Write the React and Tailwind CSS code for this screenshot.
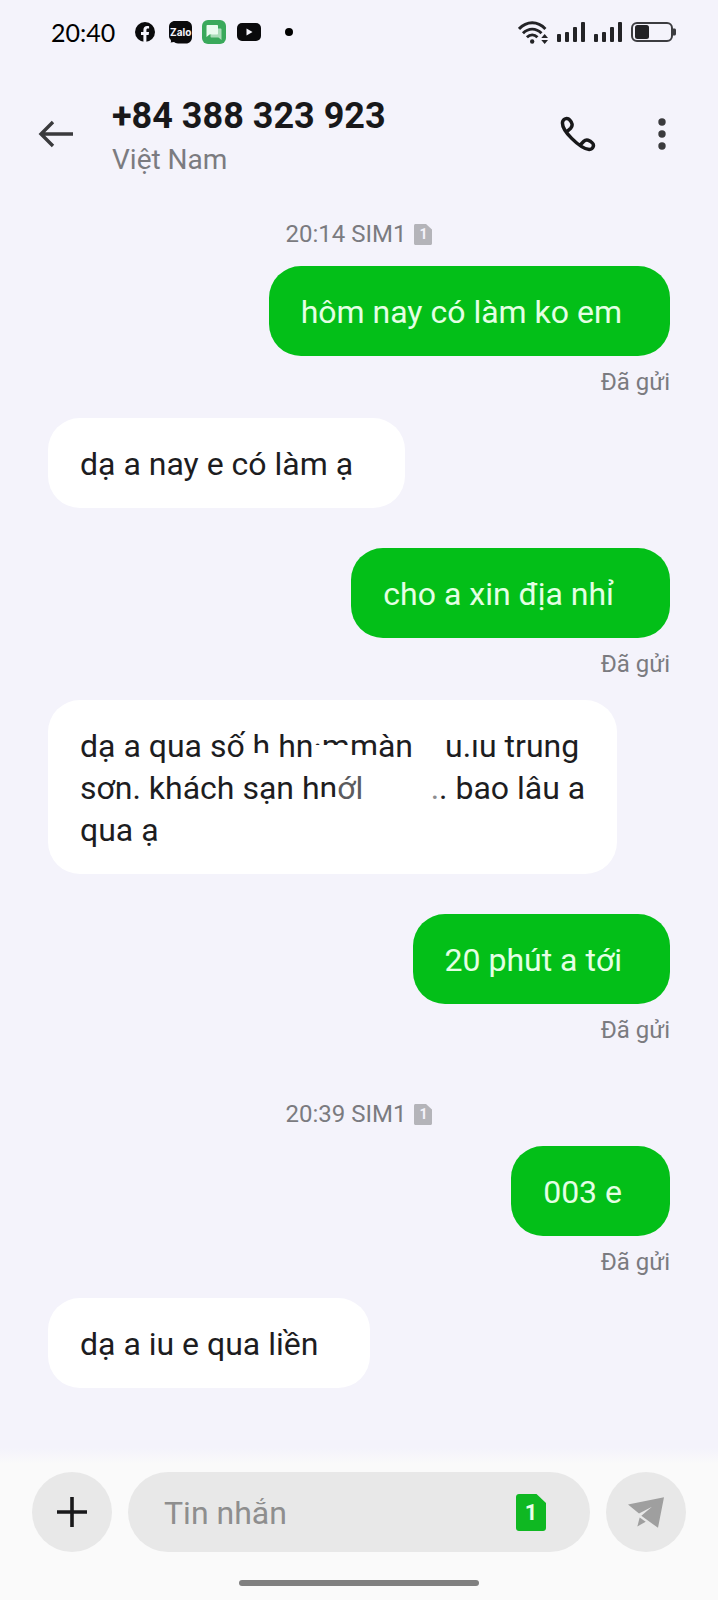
import { useState } from "react";

const conversation = [
  { type: "time", text: "20:14 SIM1" },
  { type: "sent", text: "hôm nay có làm ko em" },
  { type: "received", text: "dạ a nay e có làm ạ" },
  { type: "sent", text: "cho a xin địa nhỉ", wide: true },
  { type: "address" },
  { type: "sent", text: "20 phút a tới" },
  { type: "time", text: "20:39 SIM1" },
  { type: "sent", text: "003 e" },
  { type: "received", text: "dạ a iu e qua liền" },
];

const SignalBars = () => (
  <svg className="w-7 h-5" viewBox="0 0 28 20" fill="#232326" aria-hidden="true">
    <rect x="0" y="12" width="4" height="8" rx="1" />
    <rect x="8" y="10" width="4" height="10" rx="1" />
    <rect x="16" y="5" width="4" height="15" rx="1" />
    <rect x="24" y="0" width="4" height="20" rx="1" />
  </svg>
);

const StatusBar = () => (
  <div className="h-16 pl-[51px] pr-[42px] flex items-center justify-between">
    <div className="flex items-center">
      <span className="font-['Lato'] text-[25px] leading-8 text-black">20:40</span>
      {/* Facebook */}
      <svg className="w-5 h-5 ml-5" viewBox="0 0 20 20" aria-hidden="true">
        <circle cx="10" cy="10" r="10" fill="#0a0a0c" />
        <path d="M8.4 20v-7H6v-3h2.4V8c0-2.6 1.500-4 3.700-4 1 0 2 .2 2 .2v2.400h-1.200c-1.200 0-1.500.7-1.500 1.500V10h2.700l-.5 3h-2.200v7z" fill="#f4f3fb" />
      </svg>
      {/* Zalo */}
      <span className="relative w-[23px] h-[23px] ml-[14px] text-[#f4f3fb] text-[10px] leading-[22px] font-bold font-['Inter'] text-center">
        <svg className="absolute inset-0 w-full h-full" viewBox="0 0 23 23" aria-hidden="true">
          <path d="M6 0H17C20.500 0 23 2.500 23 6V16C23 20 20.500 22.500 17 22.500H9C7 22.500 6 21.500 5 21L1.500 21.500C2.500 20.500 2 19.500 1.500 18.500C.5 17.500 0 16.500 0 15V6C0 2.500 2.500 0 6 0Z" fill="#0a0a0c" />
        </svg>
        <span className="relative">Zalo</span>
      </span>
      {/* Messages */}
      <svg className="w-6 h-6 ml-[10px]" viewBox="0 0 24 24" aria-hidden="true">
        <rect width="24" height="24" rx="6" fill="#3aa95b" />
        <path d="M16 8.500h2.500c.6 0 1 .4 1 1V20l-3-2.500H9.500c-.6 0-1-.4-1-1V15z" fill="#a9dcb8" />
        <path d="M5.500 5h9.500c.6 0 1 .4 1 1v7.500c0 .6-.4 1-1 1H7.500L4.500 17V6c0-.6.4-1 1-1z" fill="#e9fbee" />
      </svg>
      {/* YouTube */}
      <svg className="w-6 h-[18px] ml-[11px]" viewBox="0 0 24 18" aria-hidden="true">
        <rect width="24" height="18" rx="5" fill="#0a0a0c" />
        <path d="M9.500 5.500v7l6-3.500z" fill="#f4f3fb" />
      </svg>
      <span className="w-2 h-2 ml-6 rounded-full bg-black" />
    </div>
    <div className="flex items-center gap-[9px]">
      <svg className="w-[30px] h-[23px]" viewBox="0 0 29 22" fill="none" stroke="#232326" strokeWidth="2.800" aria-hidden="true">
        <path d="M1 7.500C8.500-.4 19 -.4 26.500 7.500" />
        <path d="M4.800 11.800c5.400-5.400 12.500-5.400 17.900 0" />
        <path d="M8.600 15.600c3.200-3 7.200-3 10.200 0" />
        <circle cx="13.700" cy="19.700" r="2.100" fill="#232326" stroke="none" />
        <path d="M22.500 16.300L25.800 12.500L29 16.300zM22.500 18.200L25.800 22L29 18.200z" fill="#232326" stroke="none" />
      </svg>
      <SignalBars />
      <SignalBars />
      <svg className="w-[45px] h-5" viewBox="0 0 45 20" aria-hidden="true">
        <rect x="1" y="1" width="40" height="18" rx="5" fill="none" stroke="#3c3c40" strokeWidth="2" />
        <rect x="4" y="3" width="14" height="14" rx="2.500" fill="#232326" />
        <path d="M42 6.500h1.500c.8 0 1.500.7 1.500 1.500v4c0 .8-.7 1.500-1.500 1.500H42z" fill="#3c3c40" />
      </svg>
    </div>
  </div>
);

const Header = () => (
  <header className="pt-[30px] pl-8 pr-6 flex items-start">
    <button type="button" aria-label="Quay lại" className="w-12 h-20 flex items-center justify-center">
      <svg className="w-9 h-7" viewBox="0 0 36 28" fill="none" stroke="#3a3a3d" strokeWidth="3.400" aria-hidden="true">
        <path d="M15 2L3 14L15 26M3 14H35" />
      </svg>
    </button>
    <div className="flex-1 pl-8">
      <h1 className="text-[36px] leading-11 font-bold text-[#18181a]">+84 388 323 923</h1>
      <p className="text-[28px] leading-11 text-[#7b7b80]">Việt Nam</p>
    </div>
    <button type="button" aria-label="Gọi" className="w-12 h-20 mr-7 flex items-center justify-center">
      <svg className="w-9 h-9" viewBox="0 0 37 37" fill="none" stroke="#18181a" strokeWidth="3.600" strokeLinecap="round" strokeLinejoin="round" aria-hidden="true">
        <path d="M7.800 15.500L11 12.500C13.500 10 12.500 6.500 10 4C8 1.800 4 2.200 2.800 5.500C1.500 10 5 16 12 23C19 30 25 34 30 34.500C34.500 34 35.500 29.500 33 27.500C31 25 27 23.500 24.500 26L21 29.500" />
      </svg>
    </button>
    <button type="button" aria-label="Tùy chọn khác" className="w-16 h-20 flex items-center justify-center">
      <svg className="w-2 h-8" viewBox="0 0 8 32" fill="#3a3a3d" aria-hidden="true">
        <circle cx="4" cy="4" r="3.700" />
        <circle cx="4" cy="16" r="3.700" />
        <circle cx="4" cy="28" r="3.700" />
      </svg>
    </button>
  </header>
);

const TimeDivider = ({ text }) => (
  <div className="h-16 mt-4 flex items-center justify-center gap-2 text-2xl text-[#7b7b80]">
    <span>{text}</span>
    <span className="relative w-[18px] h-[21px] text-[#f4f3fb] text-sm leading-[21px] font-bold text-center">
      <svg className="absolute inset-0 w-full h-full" viewBox="0 0 18 21" aria-hidden="true">
        <path d="M1.500 0H12l6 5.500v14c0 .8-.7 1.500-1.500 1.500h-15C.7 21 0 20.300 0 19.500v-18C0 .7.7 0 1.500 0z" fill="#b4b4b9" />
      </svg>
      <span className="relative">1</span>
    </span>
  </div>
);

const SentMessage = ({ text, wide }) => (
  <div className="flex flex-col items-end">
    <p className={`pt-[25px] pb-[23px] pl-8 rounded-4xl bg-[#03bf18] text-[#e4ffe4] ${wide ? "pr-14" : "pr-12"}`}>
      {text}
    </p>
    <span className="pt-3 pb-[22px] text-2xl leading-7 text-[#7b7b80]">Đã gửi</span>
  </div>
);

const ReceivedMessage = ({ children, full }) => (
  <div className="flex mb-10">
    <div className={`pt-[25px] pb-[23px] pl-8 rounded-4xl bg-white text-[#1d1d1f] ${full ? "pr-8" : "pr-[52px]"}`}>
      {children}
    </div>
  </div>
);

// Letters with their lower part rubbed out
const Rubbed = ({ children, strip }) => (
  <span className="relative inline-block">
    {children}
    <span className={`absolute inset-x-0 bg-white ${strip}`} />
  </span>
);

const AddressMessage = () => (
  <ReceivedMessage full>
    <p className="flex justify-between">
      <span className="whitespace-pre">
        dạ a qua số <Rubbed strip="bottom-0 h-[14px]">h</Rubbed> h
        <Rubbed strip="bottom-0 h-[10px]">n</Rubbed>
        <Rubbed strip="bottom-0 h-[22px]">·m</Rubbed>
        <Rubbed strip="bottom-0 h-3">m</Rubbed>àn
      </span>
      <span className="pl-8 pr-[6px]">u.ıu trung</span>
    </p>
    <p className="flex justify-between">
      <span>
        sơn. khách sạn h
        <Rubbed strip="bottom-0 h-3">n</Rubbed>
        <span className="text-[#5b5b5e]">ớl</span>
      </span>
      <span>
        <span className="text-[#8d8d90]">.</span>. bao lâu a
      </span>
    </p>
    <p>qua ạ</p>
  </ReceivedMessage>
);

const Composer = () => {
  const [message, setMessage] = useState("");

  return (
    <footer className="bg-[#fafafa]">
      <div className="h-4 bg-gradient-to-b from-[#f4f3fb] to-[#fafafa]" />
      <form className="px-8 pt-2 flex gap-4" onSubmit={(e) => e.preventDefault()}>
        <button type="button" aria-label="Thêm" className="w-20 h-20 shrink-0 rounded-full bg-[#e8e8e8] flex items-center justify-center">
          <svg className="w-[30px] h-[30px]" viewBox="0 0 30 30" stroke="#18181a" strokeWidth="3.600" aria-hidden="true">
            <path d="M15 0V30M0 15H30" />
          </svg>
        </button>
        <div className="flex-1 min-w-0 h-20 pl-9 pr-11 rounded-full bg-[#e8e8e8] flex items-center">
          <input
            type="text"
            aria-label="Tin nhắn"
            placeholder="Tin nhắn"
            value={message}
            onChange={(e) => setMessage(e.target.value)}
            className="flex-1 min-w-0 h-full pt-[2px] bg-transparent outline-none text-[#1d1d1f] placeholder:text-[#8e8e8e]"
          />
          <button type="button" aria-label="SIM 1" className="relative w-[30px] h-[37px] text-[#eaffea] text-[22px] leading-[37px] font-bold">
            <svg className="absolute inset-0 w-full h-full" viewBox="0 0 30 37" aria-hidden="true">
              <path d="M3 0H20.500L30 9V34c0 1.700-1.300 3-3 3H3c-1.700 0-3-1.300-3-3V3C0 1.300 1.300 0 3 0z" fill="#0fb822" />
            </svg>
            <span className="relative">1</span>
          </button>
        </div>
        <button type="submit" aria-label="Gửi" className="w-20 h-20 shrink-0 rounded-full bg-[#e8e8e8] flex items-center justify-center">
          <svg className="w-9 h-[31px]" viewBox="0 0 108 92" fill="#9f9f9f" aria-hidden="true">
            <path d="M0 22L108 0L90 92L40 56L72 29L33 49Z" />
            <path d="M35 61L53 74L28 88Z" />
          </svg>
        </button>
      </form>
      <div className="pt-7 pb-[14px] flex justify-center">
        <div className="w-1/3 h-[6px] rounded-full bg-[#808080]" />
      </div>
    </footer>
  );
};

const App = () => {
  return (
    <div className="min-h-screen flex flex-col bg-[#f4f3fb] font-['Roboto',sans-serif] text-[32px] leading-[42px]">
      <StatusBar />
      <Header />
      <main className="flex-1 pt-1 px-12">
        {conversation.map((item, index) => {
          if (item.type === "time") return <TimeDivider key={index} text={item.text} />;
          if (item.type === "sent") return <SentMessage key={index} text={item.text} wide={item.wide} />;
          if (item.type === "address") return <AddressMessage key={index} />;
          return (
            <ReceivedMessage key={index}>
              <p>{item.text}</p>
            </ReceivedMessage>
          );
        })}
      </main>
      <Composer />
    </div>
  );
};

export default App;
